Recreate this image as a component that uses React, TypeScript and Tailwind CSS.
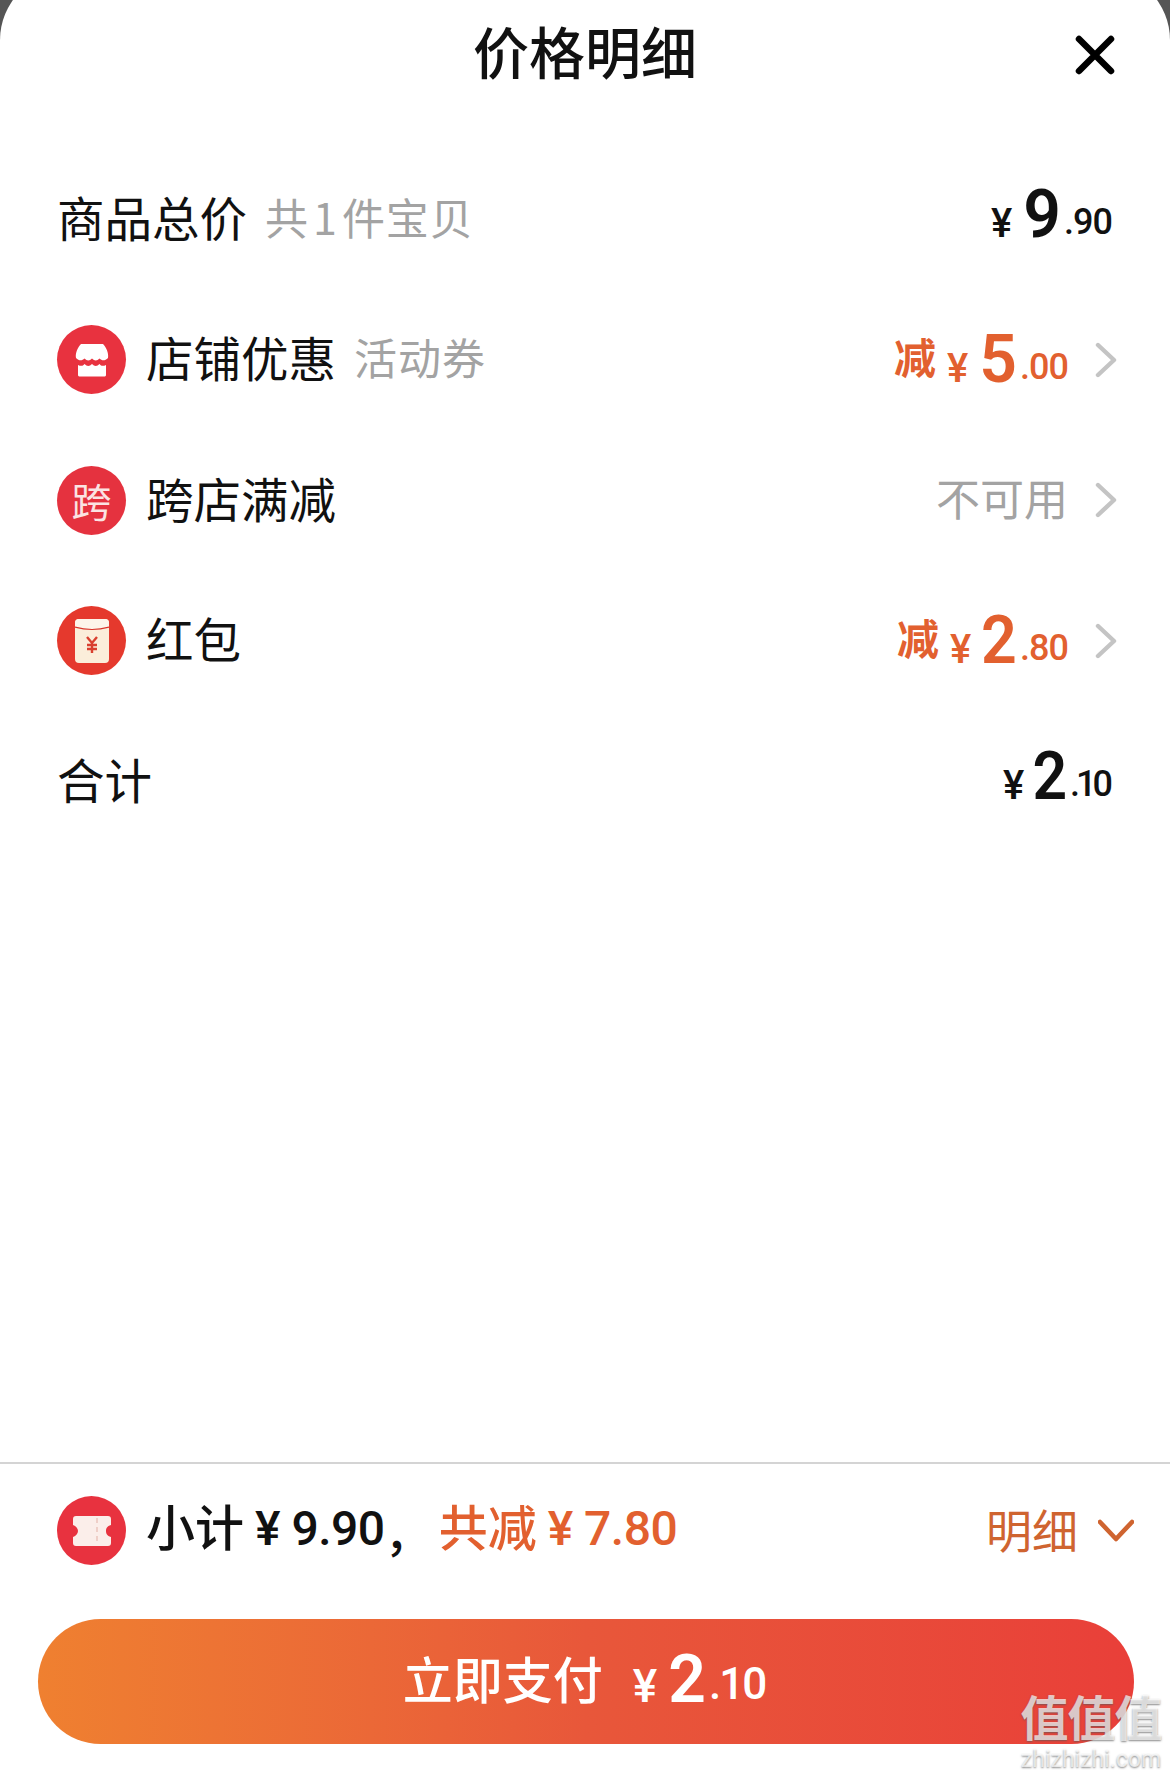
const cjk = "font-['Noto_Sans_CJK_SC',sans-serif]";
const num = "font-['Roboto','Noto_Sans_CJK_SC',sans-serif]";

const Chevron = () => (
  <svg width="22" height="36" viewBox="0 0 22 36" fill="none" className="ml-[27px]">
    <path d="M3 3 L19 18 L3 33" stroke="#c4c4c4" strokeWidth="4.4" strokeLinecap="round" strokeLinejoin="round" />
  </svg>
);

const Circle = ({ color, children }: { color: string; children: React.ReactNode }) => (
  <div className={`w-[69px] h-[69px] rounded-full flex items-center justify-center shrink-0 mr-[20px] ${color}`}>
    {children}
  </div>
);

const StoreIcon = () => (
  <svg width="34" height="34" viewBox="0 0 34 34">
    <path d="M6 1 H28 C31 4 34 10 33 15 C30 18 27 18 24.5 15.5 C22 18 19.5 18 17 15.5 C14.5 18 12 18 9.5 15.5 C7 18 4 18 1 15 C0 10 3 4 6 1 Z" fill="#fff" />
    <path d="M3 22 C6 23.5 8 23 9.5 21 C12 23.5 14.5 23.5 17 21 C19.5 23.5 22 23.5 24.5 21 C26 23 28 23.5 31 22 V32 C31 33 30 33.5 29 33.5 H5 C4 33.5 3 33 3 32 Z" fill="#fff" />
  </svg>
);

const EnvelopeIcon = () => (
  <svg width="34" height="44" viewBox="0 0 34 44">
    <rect x="0" y="0" width="34" height="44" rx="4" fill="#fbeeda" />
    <path d="M0 8 Q17 13 34 8 V4 Q34 0 30 0 H4 Q0 0 0 4 Z" fill="#fdf5ea" />
    <path d="M0 8 Q17 13 34 8" stroke="#d8352b" strokeWidth="1.2" fill="none" />
    <path d="M12 18 L17 24 L22 18 M17 24 V34 M12 26 H22 M12 30 H22" stroke="#d9402f" strokeWidth="2.4" fill="none" />
  </svg>
);

const TicketIcon = () => (
  <svg width="38" height="30" viewBox="0 0 38 30">
    <path d="M3 0 H35 C37 0 38 1 38 3 V9 C34 10 33 12.5 33 15 C33 17.5 34 20 38 21 V27 C38 29 37 30 35 30 H3 C1 30 0 29 0 27 V21 C3 20 5 17.5 5 15 C5 12.5 3 10 0 9 V3 C0 1 1 0 3 0 Z" fill="#fbeeea" />
    <path d="M24 2 V28" stroke="#efcfc8" strokeWidth="2" strokeDasharray="5 4" />
  </svg>
);

const Price = ({
  int,
  dec,
  tone,
  yenClass = "text-[40px]",
  intClass = "ml-[11px]",
  decClass = "text-[36px] tracking-[-1px]",
}: {
  int: string;
  dec: string;
  tone: string;
  yenClass?: string;
  intClass?: string;
  decClass?: string;
}) => (
  <div className={`flex items-baseline font-bold leading-none ${num} ${tone}`}>
    <span className={`font-medium ${yenClass}`}>¥</span>
    <span className={`text-[66px] font-semibold ${intClass}`}>{int}</span>
    <span className={`font-medium ml-[3px] -translate-y-[3px] ${decClass}`}>{dec}</span>
  </div>
);

const Row = ({ children }: { children: React.ReactNode }) => (
  <div className="h-[140.5px] flex items-center justify-between pl-[57px]">{children}</div>
);

const Label = ({ children }: { children: React.ReactNode }) => (
  <span className="text-[47.5px] leading-none text-[#111] pb-[6px]">{children}</span>
);

const Note = ({ children }: { children: React.ReactNode }) => (
  <span className="text-[43px] leading-none tracking-[1px] text-[#a3a3a3] ml-[18px] pb-[6px]">{children}</span>
);

export default function App() {
  return (
    <div className={`relative w-[1170px] h-[1775px] bg-[#555] overflow-hidden ${cjk}`}>
      <div className="w-full h-[1803px] -mt-[28px] bg-white rounded-t-[68px] flex flex-col">
        {/* Header */}
        <div className="relative h-[136px] pt-[28px] shrink-0 flex items-center justify-center">
          <span className="text-[56px] font-medium text-[#111] leading-none pb-[8px]">价格明细</span>
          <svg width="40" height="40" viewBox="0 0 40 40" className="absolute left-[1075px] top-[63px]">
            <path d="M4 4 L36 36 M36 4 L4 36" stroke="#000" strokeWidth="6.5" strokeLinecap="round" />
          </svg>
        </div>

        {/* Price rows */}
        <div className="mt-[41px] flex-1">
          <Row>
            <div className="flex items-center">
              <Label>商品总价</Label>
              <Note>
                共<span className="mx-[4px]">1</span>件宝贝
              </Note>
            </div>
            <div className="mr-[58px] mb-[8px]">
              <Price int="9" dec=".90" tone="text-[#111]" />
            </div>
          </Row>
          <Row>
            <div className="flex items-center">
              <Circle color="bg-[#e8323f]"><StoreIcon /></Circle>
              <Label>店铺优惠</Label>
              <Note>活动券</Note>
            </div>
            <div className="flex items-center mr-[53px]">
              <span className="text-[42px] font-bold leading-none text-[#e2602f] mr-[11px] pb-[8px]">减</span>
              <Price int="5" dec=".00" tone="text-[#e2602f]" />
              <Chevron />
            </div>
          </Row>
          <Row>
            <div className="flex items-center">
              <Circle color="bg-[#e5323f]">
                <span className="text-[40px] leading-none text-[#fbe3e3]">跨</span>
              </Circle>
              <Label>跨店满减</Label>
            </div>
            <div className="flex items-center mr-[53px]">
              <span className="text-[44px] leading-none text-[#a3a3a3] pb-[6px]">不可用</span>
              <Chevron />
            </div>
          </Row>
          <Row>
            <div className="flex items-center">
              <Circle color="bg-[#e5392d]"><EnvelopeIcon /></Circle>
              <Label>红包</Label>
            </div>
            <div className="flex items-center mr-[53px]">
              <span className="text-[42px] font-bold leading-none text-[#e2602f] mr-[11px] pb-[8px]">减</span>
              <Price int="2" dec=".80" tone="text-[#e2602f]" intClass="ml-[9px] mr-[-1px] scale-x-[0.95]" />
              <Chevron />
            </div>
          </Row>
          <Row>
            <Label>合计</Label>
            <div className="mr-[57px] mb-[8px]">
              <Price
                int="2"
                dec=".10"
                tone="text-[#111]"
                intClass="ml-[7px] mr-[-2px] scale-x-[0.92]"
                decClass="text-[36px] tracking-[-4px] pr-[4px]"
              />
            </div>
          </Row>
        </div>

        {/* Footer */}
        <div className="h-[313px] shrink-0 border-t-2 border-[#d4d4d4] flex flex-col">
          <div className="h-[133px] shrink-0 flex items-center justify-between pl-[57px] pr-[36px]">
            <div className="flex items-center">
              <Circle color="bg-[#e8323f]"><TicketIcon /></Circle>
              <span className="text-[49px] font-medium leading-none text-[#111] pb-[12px]">小计</span>
              <span className={`text-[48px] font-medium leading-none text-[#111] ml-[11px] pb-[3px] tracking-[-0.5px] ${num}`}>¥ 9.90</span>
              <span className="text-[46px] font-medium leading-none text-[#111]">，</span>
              <span className="text-[49px] font-medium leading-none text-[#e2602f] ml-[8px] pb-[12px]">共减</span>
              <span className={`text-[48px] font-medium leading-none text-[#e2602f] ml-[11px] pb-[3px] tracking-[-0.5px] ${num}`}>¥ 7.80</span>
            </div>
            <div className="flex items-center">
              <span className="text-[46px] leading-none text-[#cf6430] pb-[6px]">明细</span>
              <svg width="36" height="24" viewBox="0 0 36 24" fill="none" className="ml-[20px]">
                <path d="M2 3 L18 20 L34 3" stroke="#cf6430" strokeWidth="4.6" strokeLinecap="round" strokeLinejoin="round" />
              </svg>
            </div>
          </div>
          <div className="ml-[38px] mr-[36px] mt-[22px] h-[125px] rounded-full bg-gradient-to-r from-[#ef8030] via-[#e8573a] to-[#e93f39] flex items-center justify-center text-white">
            <span className="text-[50px] font-medium leading-none pb-[10px]">立即支付</span>
            <div className="ml-[30px] pr-[4px] mb-[4px]">
              <Price int="2" dec=".10" tone="text-white" yenClass="text-[46px]" decClass="text-[44px] tracking-[-2px]" />
            </div>
          </div>
        </div>
      </div>

      {/* Watermark */}
      <div className="absolute left-[1018px] top-[1687px] w-[146px] flex flex-col items-center text-white/70 [text-shadow:0_1px_2px_rgba(90,90,90,0.7)]">
        <span className="text-[48px] font-bold leading-[56px] tracking-[-1px]">值值值</span>
        <span className={`text-[23px] leading-[24px] mt-[5px] ${num}`}>zhizhizhi.com</span>
      </div>
    </div>
  );
}
